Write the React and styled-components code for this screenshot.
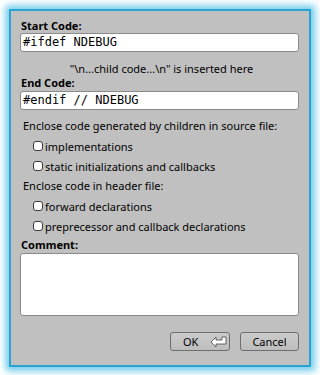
import React from "react";
import styled, { createGlobalStyle } from "styled-components";

const Global = createGlobalStyle`
  html, body { margin: 0; padding: 0; background: #ffffff; }
  body { font-family: "Noto Sans", "Open Sans", sans-serif; font-size: 11px; color: #000; }
`;

const Stage = styled.div`
  width: 320px;
  height: 375px;
  padding: 9px 9px 8px 9px;
  box-sizing: border-box;
  overflow: hidden;
`;

const Panel = styled.div`
  box-sizing: border-box;
  width: 302px;
  height: 358px;
  background: #c0c0c0;
  border: 2px solid #2aa2d3;
  box-shadow: 0 0 6px 3px rgba(92, 196, 232, 0.75), 1px 1px 9px 4px rgba(150, 220, 242, 0.6);
  padding: 8px 10px 0 9px;
  display: flex;
  flex-direction: column;
`;

const Label = styled.div`
  font-weight: 700;
  height: 14px;
  line-height: 14px;
  padding-left: 1px;
  margin-top: ${(p) => p.$mt || 0}px;
`;

const Field = styled.div`
  box-sizing: border-box;
  height: 19px;
  margin-top: ${(p) => p.$mt || 0}px;
  background: #fff;
  border: 1px solid #8a8a8a;
  border-radius: 3px;
  font-family: "DejaVu Sans Mono", monospace;
  font-size: 12px;
  line-height: 17px;
  padding-left: 2px;
  white-space: pre;
`;

const Hint = styled.div`
  text-align: center;
  height: 15px;
  line-height: 15px;
  margin-top: 9px;
  padding-left: 4px;
`;

const Section = styled.div`
  height: 20px;
  line-height: 20px;
  padding-left: 3px;
  margin-top: ${(p) => p.$mt || 0}px;
`;

const CheckRow = styled.label`
  display: flex;
  align-items: center;
  height: 20px;
  padding-left: 13px;
  gap: 2px;
`;

const Box = styled.span`
  box-sizing: border-box;
  width: 10px;
  height: 10px;
  border: 1px solid #3a3a3a;
  border-radius: 3px;
  background: #fff;
  flex: none;
`;

const Area = styled.div`
  box-sizing: border-box;
  height: 63px;
  margin-top: 1px;
  background: #fff;
  border: 1px solid #8a8a8a;
  border-radius: 3px;
`;

const Buttons = styled.div`
  display: flex;
  justify-content: flex-end;
  gap: 10px;
  margin-top: 16px;
`;

const Button = styled.div`
  box-sizing: border-box;
  width: ${(p) => p.$w}px;
  height: 19px;
  border: 1px solid #6e6e6e;
  border-radius: 3px;
  background: linear-gradient(#cbcbcb, #bdbdbd);
  display: flex;
  align-items: center;
  justify-content: ${(p) => (p.$icon ? "flex-start" : "center")};
  padding-left: ${(p) => (p.$icon ? 12 : 0)}px;
  gap: 12px;
  line-height: 17px;
`;

const ReturnIcon = () => (
  <svg width="18" height="12" viewBox="0 0 18 12">
    <path
      d="M1 7 L6 2 L6 5 L12 5 L12 2 L16 2 L16 9 L6 9 L6 12 Z"
      fill="#fff"
      stroke="#444"
      strokeWidth="0.8"
      transform="translate(0,-1)"
    />
  </svg>
);

const Check = ({ children }) => (
  <CheckRow>
    <Box />
    <span>{children}</span>
  </CheckRow>
);

export default function App() {
  return (
    <>
      <Global />
      <Stage>
        <Panel>
          <Label>Start Code:</Label>
          <Field>#ifdef NDEBUG</Field>
          <Hint>"\n...child code...\n" is inserted here</Hint>
          <Label>End Code:</Label>
          <Field $mt={1}>#endif // NDEBUG</Field>
          <Section $mt={6}>Enclose code generated by children in source file:</Section>
          <Check>implementations</Check>
          <Check>static initializations and callbacks</Check>
          <Section>Enclose code in header file:</Section>
          <Check>forward declarations</Check>
          <Check>preprecessor and callback declarations</Check>
          <Label $mt={2}>Comment:</Label>
          <Area />
          <Buttons>
            <Button $w={60} $icon>
              <span>OK</span>
              <ReturnIcon />
            </Button>
            <Button $w={59}>Cancel</Button>
          </Buttons>
        </Panel>
      </Stage>
    </>
  );
}
